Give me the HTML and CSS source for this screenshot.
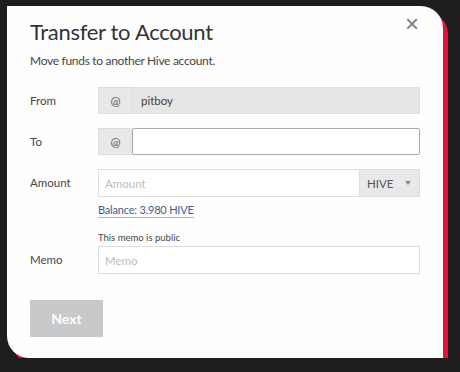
FILE: index.html
```html
<!DOCTYPE html>
<html>
<head>
    <title>Transfer to Account</title>
    <link rel="stylesheet" href="styles.css">
</head>
<body>
    <div class="modal">
        <button class="close" aria-label="Close">&times;</button>
        <h1>Transfer to Account</h1>
        <p class="intro">Move funds to another Hive account.</p>

        <div class="row">
            <label class="label">From</label>
            <div class="group">
                <span class="addon">@</span>
                <input class="field disabled" type="text" value="pitboy" disabled>
            </div>
        </div>

        <div class="row">
            <label class="label">To</label>
            <div class="group">
                <span class="addon">@</span>
                <input class="field focus" type="text">
            </div>
        </div>

        <div class="row amount-row">
            <label class="label">Amount</label>
            <div>
                <div class="group">
                    <input class="field" type="text" placeholder="Amount">
                    <span class="asset">HIVE <span class="caret"></span></span>
                </div>
                <a class="balance" href="#">Balance: 3.980 HIVE</a>
            </div>
        </div>

        <div class="row memo-row">
            <label class="label">Memo</label>
            <div>
                <div class="note">This memo is public</div>
                <input class="field memo" type="text" placeholder="Memo">
            </div>
        </div>

        <button class="next">Next</button>
    </div>
</body>
</html>
```

FILE: styles.css
```css
body { margin: 0; background: #1e1e1f; font-family: Lato, "Open Sans", sans-serif; color: #333; }
.modal { position: relative; box-sizing: border-box; width: 436px; height: 352px; margin: 6px 0 0 7px; padding: 11px 23px 0 23px; background: #fefefe; border-radius: 0 22px 0 22px; box-shadow: 5px 6px 0 #e31337; }
.close { position: absolute; top: 6px; right: 24px; border: 0; background: none; padding: 0; font-size: 24px; line-height: 24px; color: #7a7a7a; cursor: pointer; font-family: Arial, sans-serif; }
h1 { margin: 0; font-size: 22px; font-weight: 400; color: #333; line-height: 30px; letter-spacing: -0.3px; }
.intro { margin: 6px 0 19px; font-size: 12px; color: #444; letter-spacing: -0.3px; }
.row { display: grid; grid-template-columns: 68px 322px; align-items: center; margin-bottom: 14px; }
.label { font-size: 11.5px; color: #444; }
.group { display: flex; height: 27px; }
.addon { width: 34px; box-sizing: border-box; display: flex; align-items: center; justify-content: center; background: #e8e8e8; border: 1px solid #dcdcdc; border-right: 0; font-size: 12px; color: #555; }
.field { flex: 1; min-width: 0; box-sizing: border-box; height: 27px; border: 1px solid #ddd; padding: 0 6px; font-family: inherit; font-size: 11.5px; color: #333; background: #fff; outline: none; }
.field::placeholder { color: #bbb; }
.field.disabled { background: #e6e6e6; border-color: #e0e0e0; color: #444; padding-left: 8px; }
.field.focus { border-color: #a9a9a9; border-radius: 2px; }
.amount-row { align-items: start; }
.amount-row .label { line-height: 27px; }
.amount-row .group { height: 28px; }
.amount-row .field { height: 28px; }
.asset { width: 60px; box-sizing: border-box; display: flex; align-items: center; justify-content: space-between; padding: 0 8px 0 7px; background: #e8e8e8; border: 1px solid #dcdcdc; border-left: 0; font-size: 11.5px; color: #555; }
.caret { width: 0; height: 0; border-left: 3px solid transparent; border-right: 3px solid transparent; border-top: 4px solid #888; }
.balance { display: inline-block; margin-top: 6px; font-size: 11px; color: #3c5f8f; text-decoration: none; border-bottom: 1px solid #aab8cc; line-height: 14px; letter-spacing: -0.2px; }
.memo-row { align-items: end; margin-top: 12px; }
.memo-row .label { line-height: 28px; }
.note { font-size: 9.5px; color: #444; margin-bottom: 3px; }
.field.memo { width: 100%; height: 28px; }
.next { margin-top: 12px; width: 73px; height: 37px; border: 0; background: #c8c9ca; color: #fff; font-family: inherit; font-weight: 700; font-size: 14px; }
```
